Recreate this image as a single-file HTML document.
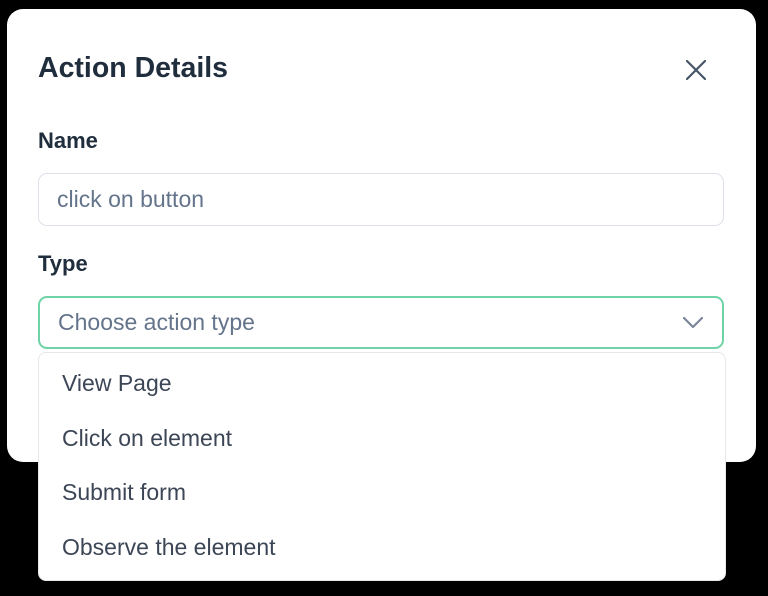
<!DOCTYPE html>
<html><head><style>
body{margin:0;width:768px;height:596px;background:#000;position:relative;overflow:hidden;font-family:"Liberation Sans",sans-serif}
.modal{position:absolute;left:7px;top:9px;width:749px;height:453px;background:#fff;border-radius:16px}
h1{position:absolute;left:31px;top:43px;margin:0;font-size:28.5px;font-weight:bold;color:#1f2d3d}
.x{position:absolute;left:679px;top:51px}
.lbl{position:absolute;left:31px;font-size:22px;font-weight:bold;color:#1f2d3d}
.inp{position:absolute;left:31px;width:686px;height:53px;border:1.5px solid #dde2e8;border-radius:9px;box-sizing:border-box;font-size:23px;color:#64748b;padding:12px 0 0 18px}
.sel{border:2px solid #6fd3a8;padding-top:11px}
.dd{position:absolute;left:38px;top:352px;width:688px;height:229px;background:#fff;border-radius:8px;border:1px solid #e5e7eb;box-sizing:border-box}
.dd div{position:absolute;left:23px;font-size:23px;color:#3c4656}
</style></head><body>
<div class="modal">
<h1>Action Details</h1>
<svg class="x" width="20" height="20" viewBox="0 0 20 20"><path d="M1 1L19 19M19 1L1 19" stroke="#475569" stroke-width="2.2" stroke-linecap="round"/></svg>
<div class="lbl" style="top:119px">Name</div>
<div class="inp" style="top:164px">click on button</div>
<div class="lbl" style="top:242px">Type</div>
<div class="inp sel" style="top:287px">Choose action type
<svg style="position:absolute;right:18px;top:18px" width="22" height="13" viewBox="0 0 22 13"><path d="M2 2L11 11L20 2" fill="none" stroke="#7c8698" stroke-width="2.2" stroke-linecap="round" stroke-linejoin="round"/></svg></div>
</div>
<div class="dd">
<div style="top:17px">View Page</div>
<div style="top:72px">Click on element</div>
<div style="top:126px">Submit form</div>
<div style="top:181px">Observe the element</div>
</div>
</body></html>
